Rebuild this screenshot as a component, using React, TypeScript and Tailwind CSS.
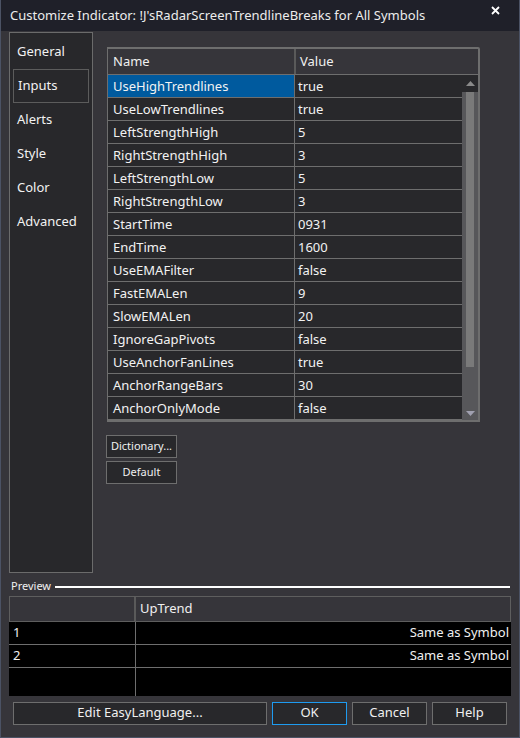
const font = { fontFamily: '"Noto Sans", "Open Sans", sans-serif' }

const inputs: [string, string][] = [
  ['UseHighTrendlines', 'true'],
  ['UseLowTrendlines', 'true'],
  ['LeftStrengthHigh', '5'],
  ['RightStrengthHigh', '3'],
  ['LeftStrengthLow', '5'],
  ['RightStrengthLow', '3'],
  ['StartTime', '0931'],
  ['EndTime', '1600'],
  ['UseEMAFilter', 'false'],
  ['FastEMALen', '9'],
  ['SlowEMALen', '20'],
  ['IgnoreGapPivots', 'false'],
  ['UseAnchorFanLines', 'true'],
  ['AnchorRangeBars', '30'],
  ['AnchorOnlyMode', 'false'],
]

const tabs = ['General', 'Inputs', 'Alerts', 'Style', 'Color', 'Advanced']

function Tabs() {
  return (
    <div className="w-[84px] h-[541px] shrink-0 bg-[#28282b] border border-[#6b6b6b] pt-[2px] px-[3px] flex flex-col">
      {tabs.map((t) => (
        <div
          key={t}
          className={
            'h-[34px] flex items-center pl-[4px] text-[13px] text-[#f2f2f2] ' +
            (t === 'Inputs' ? 'border border-[#5c5c5c] pl-[3px]' : '')
          }
        >
          {t}
        </div>
      ))}
    </div>
  )
}

function InputsGrid() {
  return (
    <div className="w-[373px] h-[375px] border-t-2 border-r-2 border-b-2 border-l border-[#6e6e6e] rounded-tr-[2px] flex flex-col overflow-hidden">
      <div className="h-[26px] flex shrink-0 border-b border-[#6e6e6e] bg-[#36353a] text-[13px] text-[#f0f0f0]">
        <div className="w-[188px] border-r-2 border-[#5a5a5a] pl-[5px] flex items-center">Name</div>
        <div className="flex-1 pl-[4px] flex items-center">Value</div>
      </div>
      <div className="flex flex-1 min-h-0">
        <div className="flex-1 flex flex-col">
          {inputs.map(([n, v], i) => (
            <div key={n} className="h-[23px] shrink-0 flex border-b border-[#6e6e6e] text-[13px] text-[#f2f2f2]">
              <div
                className={
                  'w-[187px] border-r border-[#6e6e6e] pl-[5px] pt-[1px] flex items-center ' +
                  (i === 0 ? 'bg-[#005a9e]' : 'bg-[#28282b]')
                }
              >
                {n}
              </div>
              <div className="flex-1 bg-[#28282b] pl-[3px] pt-[1px] flex items-center">{v}</div>
            </div>
          ))}
        </div>
        <div className="w-[16px] bg-[#57575a] flex flex-col items-center">
          <div className="h-[17px] w-full bg-[#28282b] flex items-center justify-center">
            <svg width="9" height="5" viewBox="0 0 9 5">
              <path d="M0 5 L4.5 0 L9 5 Z" fill="#8a8a8a" />
            </svg>
          </div>
          <div className="w-[8px] h-[275px] bg-[#7a7a7a]" />
          <div className="flex-1" />
          <div className="h-[14px] flex items-center justify-center">
            <svg width="9" height="5" viewBox="0 0 9 5">
              <path d="M0 0 L9 0 L4.5 5 Z" fill="#a0a0b0" />
            </svg>
          </div>
        </div>
      </div>
    </div>
  )
}

function SmallButton({ label }: { label: string }) {
  return (
    <div className="w-[71px] h-[23px] border border-[#6e6e6e] bg-[#28282b] flex items-center justify-center text-[11px] text-[#f0f0f0]">
      {label}
    </div>
  )
}

function Preview() {
  const rows = ['1', '2']
  return (
    <div className="mx-[8px] mt-[1px] h-[100px] bg-black flex flex-col text-[13px] text-[#f0f0f0]">
      <div className="h-[26px] shrink-0 flex bg-[#36353a] border border-[#5e5e5e]">
        <div className="w-[126px] border-r-2 border-[#5a5a5a]" />
        <div className="flex-1 pl-[4px] flex items-center">UpTrend</div>
      </div>
      {rows.map((r) => (
        <div key={r} className="h-[23px] shrink-0 flex border-b border-[#6e6e6e]">
          <div className="w-[127px] border-r border-[#6e6e6e] pl-[4px] flex items-center">{r}</div>
          <div className="flex-1 flex items-center justify-end pr-[2px]">Same as Symbol</div>
        </div>
      ))}
      <div className="flex-1 flex">
        <div className="w-[127px] border-r border-[#6e6e6e]" />
      </div>
    </div>
  )
}

function BottomButton({ label, w, primary }: { label: string; w: string; primary?: boolean }) {
  return (
    <div
      className={
        'h-[23px] bg-[#28282b] border flex items-center justify-center text-[13px] text-[#f0f0f0] ' +
        w +
        (primary ? ' border-[#1e9bf0]' : ' border-[#6e6e6e]')
      }
    >
      {label}
    </div>
  )
}

export default function App() {
  return (
    <div
      className="w-[520px] h-[738px] bg-[#36353a] border-l border-r border-b border-[#4b5264] flex flex-col overflow-hidden"
      style={font}
    >
      <div className="h-[31px] shrink-0 bg-[#1f2029] flex items-center justify-between pl-[9px] pr-[19px]">
        <span className="text-[13px] text-[#ececec]">
          Customize Indicator: !J'sRadarScreenTrendlineBreaks for All Symbols
        </span>
        <svg width="9" height="9" viewBox="0 0 9 9" className="-mt-[11px]">
          <path d="M1 1 L8 8 M8 1 L1 8" stroke="#ffffff" strokeWidth="1.8" />
        </svg>
      </div>

      <div className="flex pl-[8px] pt-[1px]">
        <Tabs />
        <div className="ml-[14px] mt-[15px] flex flex-col">
          <InputsGrid />
          <div className="mt-[13px] flex flex-col gap-[3px] -ml-[1px]">
            <SmallButton label="Dictionary..." />
            <SmallButton label="Default" />
          </div>
        </div>
      </div>

      <div className="mt-[5px] flex items-center pl-[10px] pr-[9px]">
        <span className="text-[11px] text-[#f0f0f0]">Preview</span>
        <div className="flex-1 h-[2px] bg-white ml-[4px] mt-[1px]" />
      </div>

      <Preview />

      <div className="mt-[6px] flex gap-[5px] pl-[12px]">
        <BottomButton label="Edit EasyLanguage..." w="w-[254px]" />
        <BottomButton label="OK" w="w-[75px]" primary />
        <BottomButton label="Cancel" w="w-[75px]" />
        <BottomButton label="Help" w="w-[75px]" />
      </div>
    </div>
  )
}
